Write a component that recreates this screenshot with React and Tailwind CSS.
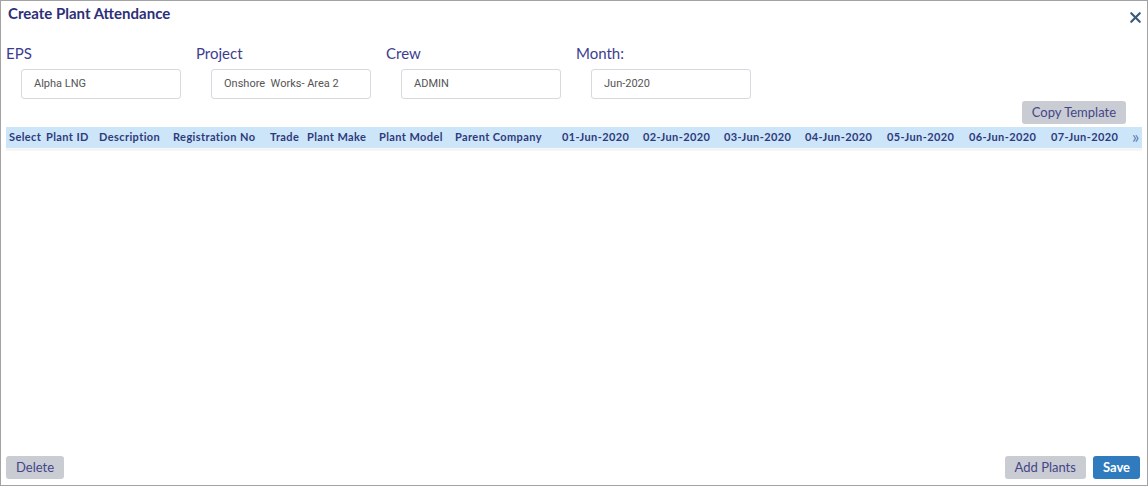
import { X } from "lucide-react"

const fields = [
  { label: "EPS", value: "Alpha LNG" },
  { label: "Project", value: "Onshore  Works- Area 2" },
  { label: "Crew", value: "ADMIN" },
  { label: "Month:", value: "Jun-2020" },
]

const columns = [
  { name: "Select", w: "w-[37px]" },
  { name: "Plant ID", w: "w-[53px]" },
  { name: "Description", w: "w-[74px]" },
  { name: "Registration No", w: "w-[97px]" },
  { name: "Trade", w: "w-[37px]" },
  { name: "Plant Make", w: "w-[72px]" },
  { name: "Plant Model", w: "w-[76px]" },
  { name: "Parent Company", w: "w-[107px]" },
  { name: "01-Jun-2020", w: "w-[81px]" },
  { name: "02-Jun-2020", w: "w-[81px]" },
  { name: "03-Jun-2020", w: "w-[81px]" },
  { name: "04-Jun-2020", w: "w-[82px]" },
  { name: "05-Jun-2020", w: "w-[82px]" },
  { name: "06-Jun-2020", w: "w-[82px]" },
  { name: "07-Jun-2020", w: "w-[81px]" },
]

export default function App() {
  return (
    <div className="w-[1148px] h-[486px] border border-[#a3a3a3] bg-white flex flex-col font-['Lato',sans-serif]">
      {/* header */}
      <div className="flex items-start justify-between pl-[7px] pr-[3px] pt-[3px] h-[40px]">
        <h2 className="text-[15px] font-bold text-[#2d2f78] leading-[18px]">Create Plant Attendance</h2>
        <X className="mt-[5px] w-[17px] h-[17px] text-[#375a78]" strokeWidth={3} />
      </div>

      {/* fields */}
      <div className="flex pl-[5px] h-[59px]">
        {fields.map((f) => (
          <div key={f.label} className="w-[190px] last:w-[189px]">
            <div className="text-[15px] text-[#3d3d8f] leading-[18px] pt-[3px]">{f.label}</div>
            <div className="ml-[15px] mt-[7px] w-[160px] h-[30px] border border-[#d7d9de] rounded-[3px] flex items-center pl-[12px] text-[11px] text-[#555] font-['Roboto',sans-serif] whitespace-pre">
              {f.value}
            </div>
          </div>
        ))}
      </div>

      {/* copy template */}
      <div className="flex justify-end pr-[21px] h-[27px] pt-[1px]">
        <button className="h-[23px] px-[10px] bg-[#c9ccd2] rounded-[3px] text-[13px] text-[#45458a]">Copy Template</button>
      </div>

      {/* table header */}
      <div className="mx-[5px] h-[21px] bg-[#cce5f8] flex items-center pl-[3px] text-[11px] font-bold tracking-[0.4px] text-[#2f3a7c] whitespace-nowrap border-b-[3px] border-b-[#f5f5f5] box-content">
        {columns.map((c) => (
          <div key={c.name} className={c.w}>{c.name}</div>
        ))}
        <div className="text-[17px] font-normal text-[#5b7bb5] leading-none -mt-[3px]">»</div>
      </div>

      <div className="flex-1" />

      {/* footer */}
      <div className="flex justify-between items-center pl-[5px] pr-[7px] pb-[6px]">
        <button className="h-[23px] px-[10px] bg-[#c9ccd2] rounded-[3px] text-[13px] text-[#45458a]">Delete</button>
        <div className="flex gap-[7px]">
          <button className="h-[23px] px-[10px] bg-[#c9ccd2] rounded-[3px] text-[13px] text-[#45458a]">Add Plants</button>
          <button className="h-[23px] px-[10px] bg-[#2f7bbd] rounded-[3px] text-[13px] font-bold text-white">Save</button>
        </div>
      </div>
    </div>
  )
}
